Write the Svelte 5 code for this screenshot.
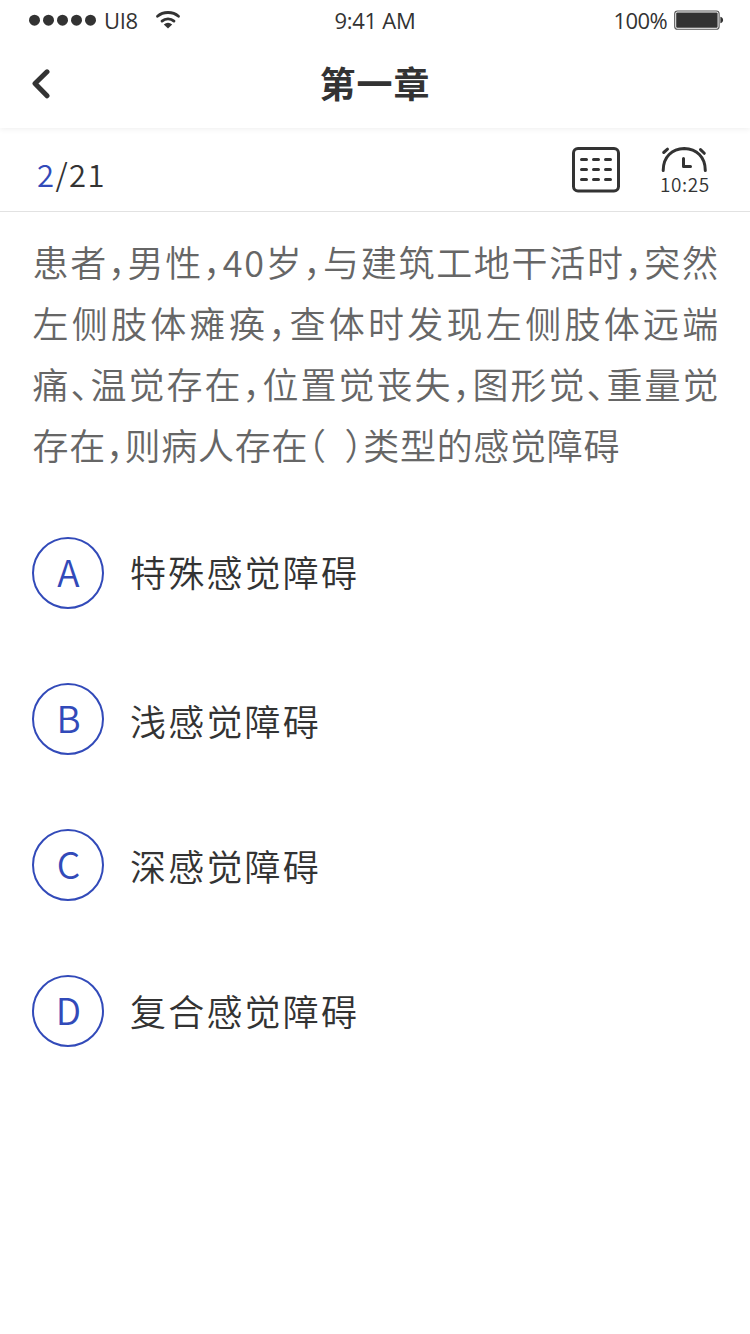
<script lang="ts">
    const lines = [
        { text: '患者，男性，40岁，与建筑工地干活时，突然', tracking: 1.7 },
        { text: '左侧肢体瘫痪，查体时发现左侧肢体远端', tracking: 3.28 },
        { text: '痛、温觉存在，位置觉丧失，图形觉、重量觉', tracking: 2 },
        { text: '存在，则病人存在（ ）类型的感觉障碍', tracking: 0.7 },
    ];

    const options = [
        { key: 'A', label: '特殊感觉障碍' },
        { key: 'B', label: '浅感觉障碍' },
        { key: 'C', label: '深感觉障碍' },
        { key: 'D', label: '复合感觉障碍' },
    ];

    let current = 2;
    let total = 21;
</script>

<div class="screen">
    <header>
        <div class="status">
            <div class="carrier">
                <svg class="dots" width="68" height="12" viewBox="0 0 68 12" aria-hidden="true">
                    {#each [0, 1, 2, 3, 4] as i}
                        <circle cx={5.5 + i * 14} cy="6.2" r="5.5" />
                    {/each}
                </svg>
                <span>UI8</span>
                <svg class="wifi" width="26" height="20" viewBox="0 0 26 20" aria-hidden="true">
                    <path d="M2.5 6.3C8.2 1.2 17.8 1.2 23.5 6.3M7 11.1C10.4 8 15.6 8 19 11.1" />
                    <path class="fill" d="M8.8 14.6Q13 11.1 17.2 14.6L13 18.4Z" />
                </svg>
            </div>
            <span class="time">9:41 AM</span>
            <div class="power">
                <span>100%</span>
                <svg width="50" height="20" viewBox="0 0 50 20" aria-hidden="true">
                    <rect x=".7" y="1" width="44.4" height="18.2" rx="2.8" fill="none" stroke="#555" stroke-width="1.1" />
                    <rect x="2.2" y="2.5" width="41.4" height="15.2" rx="1" fill="#333" />
                    <path d="M46.4 6.8C50 7.5 50 12.6 46.4 13.3Z" fill="#333" />
                </svg>
            </div>
        </div>
        <div class="nav">
            <button type="button" class="back" aria-label="返回">
                <svg width="18" height="30" viewBox="0 0 18 30" aria-hidden="true">
                    <path d="M15 2.8L3 14.5L15 26.8" />
                </svg>
            </button>
            <h1>第一章</h1>
        </div>
    </header>

    <div class="toolbar">
        <div class="progress"><em>{current}</em>/{total}</div>
        <div class="tools">
            <svg class="card" width="48" height="46" viewBox="0 0 48 46" aria-hidden="true">
                <rect x="1.5" y="1.5" width="45" height="42.5" rx="4.5" />
                <path d="M9.5 12.5h5M21.5 12.5h5M33.5 12.5h5M9.5 22.5h5M21.5 22.5h5M33.5 22.5h5M9.5 32.5h5M21.5 32.5h5M33.5 32.5h5" />
            </svg>
            <div class="timer">
                <svg width="48" height="27" viewBox="0 0 48 27" aria-hidden="true">
                    <path d="M4.2 23.5C4.2 9.5 13 2 25.2 1.6C37.5 2 46.3 9.5 46.3 23.5" />
                    <path d="M24.5 11.5V19.5H31.5M4.7 5.5L8.5 2.2M41.5 2.6L45.3 6.3" />
                </svg>
                <span>10:25</span>
            </div>
        </div>
    </div>

    <main>
        <p class="question">
            {#each lines as line}
                <span style:letter-spacing="{line.tracking}px">{line.text}</span>
            {/each}
        </p>
        <ul>
            {#each options as option}
                <li>
                    <span class="key">{option.key}</span>
                    <span class="label">{option.label}</span>
                </li>
            {/each}
        </ul>
    </main>
</div>

<style>
    :global(body) { background: #fff; }
    .screen {
        width: 750px; height: 1334px; overflow: hidden; background: #fff;
        color: #333; font-family: "Noto Sans CJK SC", sans-serif; font-weight: 350;
    }
    svg { display: block; flex: none; }
    header { height: 128px; box-shadow: 0 1px 6px rgba(0, 0, 0, 0.07); }
    .status {
        height: 40px; padding: 0 26px 0 29px; box-sizing: border-box;
        display: grid; grid-template-columns: 1fr auto 1fr; align-items: center;
        font: 22px/40px "Open Sans", "Noto Sans", sans-serif;
    }
    .carrier, .power { display: flex; align-items: center; }
    .carrier span { width: 34px; margin: 0 17px 0 7px; letter-spacing: -0.3px; }
    .dots { fill: #333; }
    .wifi { fill: none; stroke: #333; stroke-width: 2.8; stroke-linecap: round; }
    .wifi .fill { fill: #333; stroke: none; }
    .time { margin-right: 3px; letter-spacing: -0.3px; }
    .power { justify-content: flex-end; gap: 7px; }
    .power span { letter-spacing: -0.6px; }
    .nav {
        height: 88px; padding: 0 32px; display: grid;
        grid-template-columns: 60px 1fr 60px; align-items: center;
    }
    .back { border: none; background: none; padding: 0; justify-self: start; }
    .back path { fill: none; stroke: #333; stroke-width: 5; stroke-linecap: round; stroke-linejoin: round; }
    h1 {
        margin: 0; padding-bottom: 4px; text-align: center; font-size: 36px;
        line-height: 84px; font-weight: 700; letter-spacing: 1px;
    }
    .toolbar {
        height: 84px; padding: 0 39px 0 37px; box-sizing: border-box;
        border-bottom: 1px solid #e2e2e2; display: flex; justify-content: space-between;
    }
    .progress { font-size: 31px; line-height: 92px; letter-spacing: 1.4px; }
    .progress em { font-style: normal; color: #324ab9; }
    .tools { display: flex; gap: 39px; padding-top: 19px; }
    .tools svg { fill: none; stroke: #333; stroke-width: 3; stroke-linecap: round; stroke-linejoin: round; }
    .timer { width: 52px; font-size: 19px; line-height: 20px; letter-spacing: 0.6px; }
    .timer span { padding-left: 1px; }
    .question {
        margin: 0; padding: 19px 32px 0 32.5px; color: #666;
        font-size: 36px; line-height: 61px; font-feature-settings: "halt"; word-spacing: 9px;
    }
    .question span { display: block; white-space: nowrap; }
    ul { list-style: none; margin: 0; padding: 62px 32px 0; display: grid; gap: 74px; }
    li { display: flex; gap: 26px; height: 72px; }
    .key {
        width: 72px; height: 72px; padding-left: 1px; box-sizing: border-box;
        border: 2px solid #324ab9; border-radius: 50%; color: #324ab9;
        font-size: 37px; line-height: 65px; text-align: center;
    }
    .label { font-size: 36px; line-height: 72px; letter-spacing: 2.2px; }
    li:first-child .label { line-height: 68px; }
    li:nth-child(2) .label { line-height: 74px; }
    li:last-child .label { line-height: 70px; }
</style>
